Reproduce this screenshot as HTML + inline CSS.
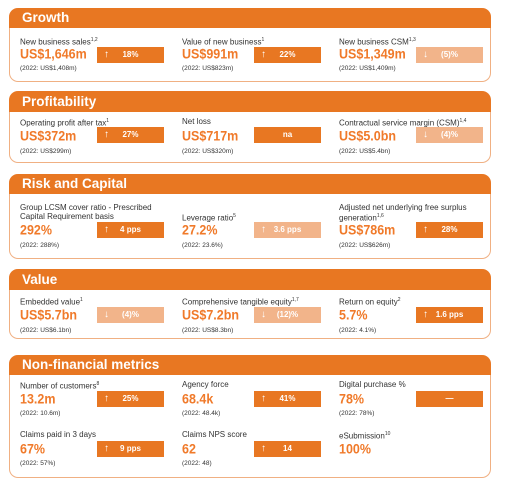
<!DOCTYPE html>
<html><head><meta charset="utf-8"><style>
body{margin:0;width:505px;height:486px;background:#fff;position:relative;font-family:"Liberation Sans",sans-serif;overflow:hidden}
.p{position:absolute;left:9px;width:482px;border:1px solid #f0b083;border-top:none;border-radius:9px;box-sizing:border-box}
.h{position:absolute;left:9px;width:482px;background:#e87722;border-radius:9px 9px 0 0;color:#fff;font-weight:bold;font-size:13.5px;padding-left:13px;box-sizing:border-box}
.l{position:absolute;font-size:8px;color:#333;line-height:9px;white-space:nowrap}
.l sup{font-size:5px}
.v{position:absolute;font-size:12.5px;font-weight:bold;color:#f07a2a;line-height:16px;transform:scaleY(1.1);transform-origin:left center}
.s{position:absolute;font-size:6.5px;color:#333;margin-top:2px}
.b{position:absolute;width:67px;height:16px;background:#e87722;color:#fff;font-size:8px;font-weight:bold;line-height:16px;text-align:center}
.b.lt{background:#f2b48a}
.b i{position:absolute;left:7px;font-style:normal;font-size:10px}
</style></head><body>

<div class="p" style="top:8px;height:74px"></div><div class="h" style="top:8px;height:20px;line-height:20px">Growth</div>
<div class="l" style="left:20px;top:36px">New business sales<sup>1,2</sup></div>
<div class="v" style="left:20px;top:46px">US$1,646m</div><div class="s" style="left:20px;top:63px">(2022: US$1,408m)</div>
<div class="b" style="left:97px;top:47px"><i>↑</i>18%</div>
<div class="l" style="left:182px;top:36px">Value of new business<sup>1</sup></div>
<div class="v" style="left:182px;top:46px">US$991m</div><div class="s" style="left:182px;top:63px">(2022: US$823m)</div>
<div class="b" style="left:254px;top:47px"><i>↑</i>22%</div>
<div class="l" style="left:339px;top:36px">New business CSM<sup>1,3</sup></div>
<div class="v" style="left:339px;top:46px">US$1,349m</div><div class="s" style="left:339px;top:63px">(2022: US$1,409m)</div>
<div class="b lt" style="left:416px;top:47px"><i>↓</i>(5)%</div>

<div class="p" style="top:92px;height:71px"></div><div class="h" style="top:91px;height:21px;line-height:21px">Profitability</div>
<div class="l" style="left:20px;top:117px">Operating profit after tax<sup>1</sup></div>
<div class="v" style="left:20px;top:128px">US$372m</div><div class="s" style="left:20px;top:146px">(2022: US$299m)</div>
<div class="b" style="left:97px;top:127px"><i>↑</i>27%</div>
<div class="l" style="left:182px;top:117px">Net loss</div>
<div class="v" style="left:182px;top:128px">US$717m</div><div class="s" style="left:182px;top:146px">(2022: US$320m)</div>
<div class="b" style="left:254px;top:127px">na</div>
<div class="l" style="left:339px;top:117px">Contractual service margin (CSM)<sup>1,4</sup></div>
<div class="v" style="left:339px;top:128px">US$5.0bn</div><div class="s" style="left:339px;top:146px">(2022: US$5.4bn)</div>
<div class="b lt" style="left:416px;top:127px"><i>↓</i>(4)%</div>

<div class="p" style="top:174px;height:85px"></div><div class="h" style="top:174px;height:20px;line-height:20px">Risk and Capital</div>
<div class="l" style="left:20px;top:203px">Group LCSM cover ratio - Prescribed<br>Capital Requirement basis</div>
<div class="v" style="left:20px;top:222px">292%</div><div class="s" style="left:20px;top:240px">(2022: 288%)</div>
<div class="b" style="left:97px;top:222px"><i>↑</i>4 pps</div>
<div class="l" style="left:182px;top:212px">Leverage ratio<sup>5</sup></div>
<div class="v" style="left:182px;top:222px">27.2%</div><div class="s" style="left:182px;top:240px">(2022: 23.6%)</div>
<div class="b lt" style="left:254px;top:222px"><i>↑</i>3.6 pps</div>
<div class="l" style="left:339px;top:203px">Adjusted net underlying free surplus<br>generation<sup>1,6</sup></div>
<div class="v" style="left:339px;top:222px">US$786m</div><div class="s" style="left:339px;top:240px">(2022: US$626m)</div>
<div class="b" style="left:416px;top:222px"><i>↑</i>28%</div>

<div class="p" style="top:269px;height:70px"></div><div class="h" style="top:269px;height:21px;line-height:21px">Value</div>
<div class="l" style="left:20px;top:296px">Embedded value<sup>1</sup></div>
<div class="v" style="left:20px;top:307px">US$5.7bn</div><div class="s" style="left:20px;top:325px">(2022: US$6.1bn)</div>
<div class="b lt" style="left:97px;top:307px"><i>↓</i>(4)%</div>
<div class="l" style="left:182px;top:296px">Comprehensive tangible equity<sup>1,7</sup></div>
<div class="v" style="left:182px;top:307px">US$7.2bn</div><div class="s" style="left:182px;top:325px">(2022: US$8.3bn)</div>
<div class="b lt" style="left:254px;top:307px"><i>↓</i>(12)%</div>
<div class="l" style="left:339px;top:296px">Return on equity<sup>2</sup></div>
<div class="v" style="left:339px;top:307px">5.7%</div><div class="s" style="left:339px;top:325px">(2022: 4.1%)</div>
<div class="b" style="left:416px;top:307px"><i>↑</i>1.6 pps</div>

<div class="p" style="top:355px;height:123px"></div><div class="h" style="top:355px;height:20px;line-height:20px">Non-financial metrics</div>
<div class="l" style="left:20px;top:380px">Number of customers<sup>8</sup></div>
<div class="v" style="left:20px;top:391px">13.2m</div><div class="s" style="left:20px;top:408px">(2022: 10.6m)</div>
<div class="b" style="left:97px;top:391px"><i>↑</i>25%</div>
<div class="l" style="left:182px;top:380px">Agency force</div>
<div class="v" style="left:182px;top:391px">68.4k</div><div class="s" style="left:182px;top:408px">(2022: 48.4k)</div>
<div class="b" style="left:254px;top:391px"><i>↑</i>41%</div>
<div class="l" style="left:339px;top:380px">Digital purchase %</div>
<div class="v" style="left:339px;top:391px">78%</div><div class="s" style="left:339px;top:408px">(2022: 78%)</div>
<div class="b" style="left:416px;top:391px">—</div>
<div class="l" style="left:20px;top:430px">Claims paid in 3 days</div>
<div class="v" style="left:20px;top:441px">67%</div><div class="s" style="left:20px;top:458px">(2022: 57%)</div>
<div class="b" style="left:97px;top:441px"><i>↑</i>9 pps</div>
<div class="l" style="left:182px;top:430px">Claims NPS score</div>
<div class="v" style="left:182px;top:441px">62</div><div class="s" style="left:182px;top:458px">(2022: 48)</div>
<div class="b" style="left:254px;top:441px"><i>↑</i>14</div>
<div class="l" style="left:339px;top:430px">eSubmission<sup>10</sup></div>
<div class="v" style="left:339px;top:441px">100%</div>
</body></html>
